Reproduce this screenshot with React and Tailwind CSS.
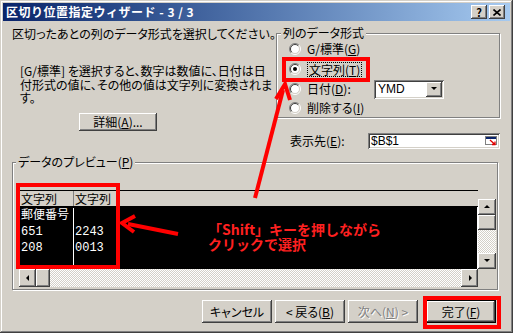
const raised =
  "bg-[#d4d0c8] shadow-[inset_-1px_-1px_0_#404040,inset_1px_1px_0_#ffffff,inset_-2px_-2px_0_#808080]";
const sunken =
  "bg-white shadow-[inset_1px_1px_0_#808080,inset_-1px_-1px_0_#ffffff,inset_2px_2px_0_#404040,inset_-2px_-2px_0_#d4d0c8]";
const etched =
  "border border-[#808080] shadow-[1px_1px_0_#ffffff,inset_1px_1px_0_#ffffff]";
const dither =
  "bg-[repeating-conic-gradient(#ffffff_0_25%,#d4d0c8_0_50%)] bg-[length:2px_2px]";

// classic radio button
function Radio({ checked }) {
  return (
    <svg width="12" height="12" viewBox="0 0 12 12" className="shrink-0">
      <circle cx="6" cy="6" r="4.5" fill="#fff" />
      <path d="M2.1 9.9A5.5 5.5 0 0 1 9.9 2.1" fill="none" stroke="#808080" />
      <path d="M9.9 2.1A5.5 5.5 0 0 1 2.1 9.9" fill="none" stroke="#fff" />
      <path d="M2.8 9.2A4.5 4.5 0 0 1 9.2 2.8" fill="none" stroke="#404040" />
      <path d="M9.2 2.8A4.5 4.5 0 0 1 2.8 9.2" fill="none" stroke="#d4d0c8" />
      {checked && <circle cx="6" cy="6" r="2" fill="#000" />}
    </svg>
  );
}

function Tri({ dir }) {
  const pts = {
    up: "1,5 4,2 7,5",
    down: "1,2 4,5 7,2",
    left: "5,1 2,4 5,7",
    right: "3,1 6,4 3,7",
  }[dir];
  return (
    <svg width="8" height="8" viewBox="0 0 8 8">
      <polygon points={pts} fill="#000" />
    </svg>
  );
}

function ScrollBtn({ dir, className = "" }) {
  return (
    <div className={`flex items-center justify-center ${raised} ${className}`}>
      <Tri dir={dir} />
    </div>
  );
}

export default function App() {
  return (
    <div className="relative h-[333px] w-[513px] overflow-hidden bg-[#d4d0c8] p-[3px] text-[12px] text-black shadow-[inset_-1px_-1px_0_#404040,inset_1px_1px_0_#d4d0c8,inset_-2px_-2px_0_#808080,inset_2px_2px_0_#ffffff] font-['Noto_Sans_CJK_JP','Noto_Sans',sans-serif] [font-feature-settings:'palt']">
      {/* title bar */}
      <div className="flex h-[18px] items-center bg-linear-to-r from-[#0a246a] to-[#a6caf0] pl-[3px] pr-[5px]">
        <span className="whitespace-pre text-[12px] font-bold leading-none tracking-[0.5px] text-white [font-feature-settings:normal]">
          区切り位置指定ウィザード - 3 / 3
        </span>
        <div className="ml-auto flex gap-[2px]">
          <div className={`flex h-[14px] w-[16px] items-center justify-center text-[11px] font-bold leading-none ${raised}`}>
            ?
          </div>
          <div className={`flex h-[14px] w-[16px] items-center justify-center ${raised}`}>
            <svg width="8" height="7" viewBox="0 0 8 7">
              <path d="M0.5 0.5L7.5 6.5M7.5 0.5L0.5 6.5" stroke="#000" strokeWidth="1.6" />
            </svg>
          </div>
        </div>
      </div>

      {/* top section */}
      <div className="flex">
        <div className="w-[273px] pl-[9px]">
          <p className="mt-[6px] whitespace-nowrap leading-[14px]">
            区切ったあとの列のデータ形式を選択してください。
          </p>
          <p className="ml-[8px] mt-[23px] whitespace-nowrap leading-[13.5px]">
            [G/標準] を選択すると、数字は数値に、日付は日
            <br />
            付形式の値に、その他の値は文字列に変換されま
            <br />
            す。
          </p>
          <button className={`ml-[67px] mt-[8px] flex h-[18px] w-[78px] items-center justify-center ${raised}`}>
            詳細(<u>A</u>)...
          </button>
        </div>

        <div className="w-[224px]">
          <fieldset className={`mt-[5px] ${etched}`}>
            <legend className="ml-[4px] bg-[#d4d0c8] px-[2px] leading-[14px]">列のデータ形式</legend>
            <div className="-mt-[1px] flex h-[20px] items-center gap-[6px] pl-[12px]">
              <Radio />
              <span>G/標準(<u>G</u>)</span>
            </div>
            <div className="flex h-[20px] items-center gap-[6px] pl-[12px]">
              <Radio checked />
              <span className="border border-dotted border-black px-[1px] leading-[13px]">
                文字列(<u>T</u>)
              </span>
            </div>
            <div className="flex h-[20px] items-center gap-[6px] pl-[12px]">
              <Radio />
              <span className="w-[61px]">日付(<u>D</u>):</span>
              <div className={`flex h-[19px] w-[70px] items-center pl-[4px] ${sunken}`}>
                <span className="font-['Liberation_Sans',sans-serif]">YMD</span>
                <ScrollBtn dir="down" className="ml-auto mr-[2px] h-[15px] w-[16px]" />
              </div>
            </div>
            <div className="flex h-[18px] items-center gap-[6px] pl-[12px]">
              <Radio />
              <span>削除する(<u>I</u>)</span>
            </div>
          </fieldset>

          <div className="mt-[14px] flex items-center">
            <span className="w-[92px] pl-[14px]">表示先(<u>E</u>):</span>
            <div className={`flex h-[16px] w-[132px] items-center pl-[3px] ${sunken}`}>
              <span className="font-['Liberation_Sans',sans-serif] text-[12px]">$B$1</span>
              <svg width="13" height="10" viewBox="0 0 13 10" className="ml-auto mr-[2px]">
                <rect x="0.5" y="0.5" width="11" height="8" fill="#fff" stroke="#808080" />
                <rect x="1" y="1" width="10" height="2" fill="#0a246a" />
                <path d="M5 4L10 8.5M10 5.5V8.5H7" stroke="#e00000" strokeWidth="1.3" fill="none" />
              </svg>
            </div>
          </div>
        </div>
      </div>

      {/* preview */}
      <fieldset className={`ml-[9px] mt-[5px] w-[486px] pb-[2px] ${etched}`}>
        <legend className="ml-[3px] bg-[#d4d0c8] px-[2px] leading-[14px]">
          データのプレビュー(<u>P</u>)
        </legend>
        <div className="ml-[6px] mt-[21px] flex h-[97px] w-[477px]">
          <div className="flex w-[459px] flex-col">
            <div className="flex h-[17px] items-center border-l border-t border-b border-black bg-[#d4d0c8]">
              <div className="h-full w-[54px] border-r border-[#808080] pl-[1px] leading-[15px]">文字列</div>
              <div className="h-full w-[44px] border-r border-[#808080] pl-[1px] leading-[15px]">文字列</div>
            </div>
            <div className="flex h-[62px] border-l border-r border-black border-r-white bg-black pt-[1px] leading-[16px] text-white font-['Liberation_Mono','Noto_Sans_CJK_JP',monospace]">
              <div className="w-[54px] border-r border-white pl-[1px]">
                <div>郵便番号</div>
                <div>651</div>
                <div>208</div>
              </div>
              <div className="w-[44px] pl-[1px]">
                <div>&nbsp;</div>
                <div>2243</div>
                <div>0013</div>
              </div>
            </div>
            <div className="flex h-[18px]">
              <ScrollBtn dir="left" className="w-[17px]" />
              <div className={`w-[14px] ${raised}`} />
              <div className={`flex-1 ${dither}`} />
              <ScrollBtn dir="right" className="w-[17px]" />
            </div>
          </div>
          <div className="flex w-[18px] flex-col">
            <div className="h-[9px]" />
            <div className="flex h-[70px] flex-col">
              <ScrollBtn dir="up" className="h-[16px]" />
              <div className={`h-[15px] ${raised}`} />
              <div className={`flex-1 ${dither}`} />
              <ScrollBtn dir="down" className="h-[16px]" />
            </div>
          </div>
        </div>
      </fieldset>

      {/* buttons */}
      <div className="mt-[10px] flex justify-end pr-[14px]">
        <button className={`h-[23px] w-[70px] ${raised}`}>キャンセル</button>
        <button className={`ml-[3px] h-[23px] w-[70px] ${raised}`}>&lt; 戻る(<u>B</u>)</button>
        <button className={`ml-[3px] h-[23px] w-[70px] text-[#808080] [text-shadow:1px_1px_0_#ffffff] ${raised}`}>
          次へ(<u>N</u>) &gt;
        </button>
        <button className="ml-[8px] h-[23px] w-[70px] border border-black bg-[#d4d0c8] shadow-[inset_-1px_-1px_0_#404040,inset_1px_1px_0_#ffffff,inset_-2px_-2px_0_#808080]">
          完了(<u>F</u>)
        </button>
      </div>

      {/* red annotations */}
      <div className="absolute left-[282px] top-[57px] h-[25px] w-[88px] border-4 border-[#ff0000]" />
      <div className="absolute left-[16px] top-[183px] h-[86px] w-[104px] border-4 border-[#ff0000]" />
      <div className="absolute left-[423px] top-[296px] h-[33px] w-[78px] border-4 border-[#ff0000]" />
      <div className="absolute left-[208px] top-[222px] whitespace-nowrap text-[14px] font-bold leading-[15px] text-[#ff2020] [font-feature-settings:normal]">
        「Shift」キーを押しながら
        <br />
        クリックで選択
      </div>
      <svg className="pointer-events-none absolute left-0 top-0" width="513" height="333" viewBox="0 0 513 333">
        <g stroke="#ff0000" strokeWidth="4" fill="none" strokeLinejoin="miter">
          <path d="M178 234L128 224" />
          <path d="M135 216L122 223L134 232" />
          <path d="M255 198L283 90" />
          <path d="M276 99L285 84L290 100" />
        </g>
      </svg>
    </div>
  );
}
